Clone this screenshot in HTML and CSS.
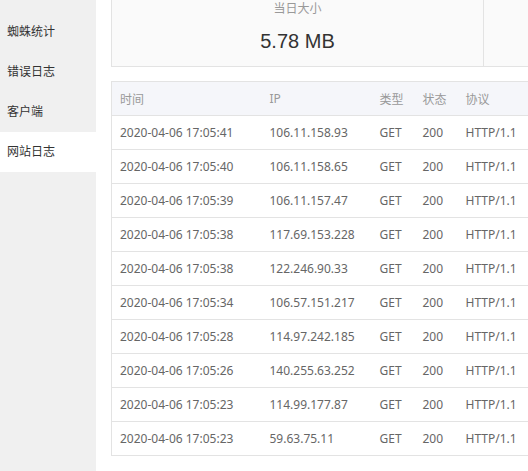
FILE: index.html
```html
<!DOCTYPE html>
<html>
<head>
<meta charset="utf-8">
<link rel="stylesheet" href="styles.css">
</head>
<body>
<div class="app">
  <aside class="sidebar">
    <div class="nav-item">蜘蛛统计</div>
    <div class="nav-item">错误日志</div>
    <div class="nav-item">客户端</div>
    <div class="nav-item active">网站日志</div>
  </aside>
  <main class="main">
    <div class="stats">
      <div class="stat">
        <div class="stat-label">当日大小</div>
        <div class="stat-value">5.78 MB</div>
      </div>
      <div class="stat">
        <div class="stat-label">&nbsp;</div>
        <div class="stat-value">&nbsp;</div>
      </div>
    </div>
    <table class="log">
      <colgroup>
        <col class="c-time"><col class="c-ip"><col class="c-type"><col class="c-status"><col class="c-proto">
      </colgroup>
      <thead>
        <tr><th>时间</th><th>IP</th><th>类型</th><th>状态</th><th>协议</th></tr>
      </thead>
      <tbody>
        <tr><td>2020-04-06 17:05:41</td><td>106.11.158.93</td><td>GET</td><td>200</td><td>HTTP/1.1</td></tr>
        <tr><td>2020-04-06 17:05:40</td><td>106.11.158.65</td><td>GET</td><td>200</td><td>HTTP/1.1</td></tr>
        <tr><td>2020-04-06 17:05:39</td><td>106.11.157.47</td><td>GET</td><td>200</td><td>HTTP/1.1</td></tr>
        <tr><td>2020-04-06 17:05:38</td><td>117.69.153.228</td><td>GET</td><td>200</td><td>HTTP/1.1</td></tr>
        <tr><td>2020-04-06 17:05:38</td><td>122.246.90.33</td><td>GET</td><td>200</td><td>HTTP/1.1</td></tr>
        <tr><td>2020-04-06 17:05:34</td><td>106.57.151.217</td><td>GET</td><td>200</td><td>HTTP/1.1</td></tr>
        <tr><td>2020-04-06 17:05:28</td><td>114.97.242.185</td><td>GET</td><td>200</td><td>HTTP/1.1</td></tr>
        <tr><td>2020-04-06 17:05:26</td><td>140.255.63.252</td><td>GET</td><td>200</td><td>HTTP/1.1</td></tr>
        <tr><td>2020-04-06 17:05:23</td><td>114.99.177.87</td><td>GET</td><td>200</td><td>HTTP/1.1</td></tr>
        <tr><td>2020-04-06 17:05:23</td><td>59.63.75.11</td><td>GET</td><td>200</td><td>HTTP/1.1</td></tr>
      </tbody>
    </table>
  </main>
</div>
</body>
</html>
```
FILE: styles.css
```css
html, body {
  margin: 0;
  padding: 0;
  overflow: hidden;
  background: #fff;
}
body {
  font-family: "Noto Sans", "Noto Sans CJK SC", sans-serif;
  font-size: 12px;
  color: #333;
}
.app {
  display: flex;
  width: 528px;
  height: 471px;
  overflow: hidden;
}
.sidebar {
  flex: 0 0 96px;
  background: #f0f0f0;
  padding-top: 12px;
}
.nav-item {
  height: 40px;
  line-height: 40px;
  padding-left: 7px;
  font-size: 12px;
  color: #333;
}
.nav-item.active {
  background: #fff;
}
.main {
  flex: 1 1 auto;
  min-width: 0;
  overflow: hidden;
  padding-left: 15px;
}
.stats {
  display: flex;
  margin-top: -20px;
  border: 1px solid #e3e3e3;
  background: #fafafa;
  width: 744px;
}
.stat {
  flex: 0 0 371px;
  text-align: center;
  padding: 20px 0 13px;
}
.stat + .stat {
  border-left: 1px solid #e3e3e3;
}
.stat-label {
  font-size: 12px;
  line-height: 16px;
  color: #999;
}
.stat-value {
  margin-top: 12px;
  font-family: "Liberation Sans", Arial, sans-serif;
  font-size: 20px;
  line-height: 24px;
  color: #333;
}
.log {
  margin-top: 14px;
  border-collapse: collapse;
  table-layout: fixed;
  width: 480px;
  border-left: 1px solid #e3e3e3;
  border-bottom: 1px solid #e3e3e3;
}
.c-time { width: 150px; }
.c-ip { width: 110px; }
.c-type { width: 43px; }
.c-status { width: 43px; }
.c-proto { width: 134px; }
.log th, .log td {
  height: 33px;
  padding: 0 0 0 8px;
  text-align: left;
  font-weight: normal;
  border-top: 1px solid #e3e3e3;
  white-space: nowrap;
}
.log th {
  background: #f5f6fa;
  color: #999;
}
.log td {
  color: #666;
}
```
